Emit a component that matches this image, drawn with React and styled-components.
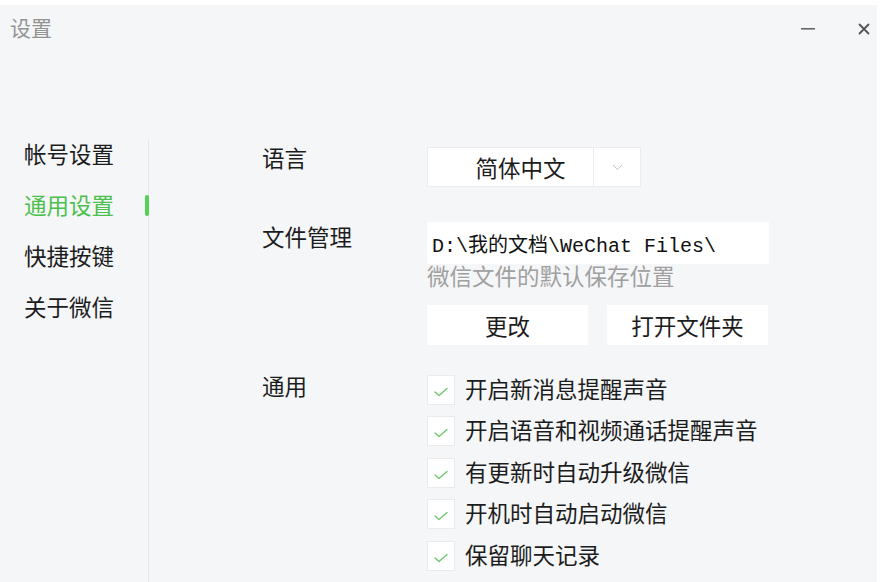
import React from "react";
import styled, { createGlobalStyle } from "styled-components";

const Global = createGlobalStyle`
  html, body { margin: 0; padding: 0; background: #ffffff; overflow: hidden; }
  body { font-family: "Noto Sans CJK SC", "Noto Sans", sans-serif; color: #1c1c1c; }
  * { box-sizing: border-box; }
`;

const Window = styled.div`
  margin-top: 5px;
  width: 877px;
  height: 577px;
  background: #f5f6f8;
  display: flex;
  flex-direction: column;
  overflow: hidden;
`;

const TitleBar = styled.div`
  height: 123px;
  flex-shrink: 0;
  display: flex;
  align-items: flex-start;
  justify-content: space-between;
  padding: 8px 0 0 10px;
`;

const Title = styled.div`
  font-size: 21px;
  line-height: 28px;
  color: #939393;
`;

const Controls = styled.div`
  display: flex;
  align-items: center;
  gap: 36px;
  padding: 6px 3px 0 0;
`;

const CtrlBtn = styled.div`
  width: 20px;
  height: 20px;
  display: flex;
  align-items: center;
  justify-content: center;
`;

const Body = styled.div`
  flex: 1;
  display: flex;
`;

const Sidebar = styled.nav`
  position: relative;
  width: 149px;
  flex-shrink: 0;
  padding-left: 24px;
  &::after {
    content: "";
    position: absolute;
    right: 0;
    top: 12px;
    bottom: 0;
    width: 1px;
    background: #e4e5e8;
  }
`;

const NavItem = styled.div`
  position: relative;
  height: 51px;
  line-height: 51px;
  font-size: 22.5px;
  color: ${(p) => (p.$active ? "#4cc04c" : "#1c1c1c")};
`;

const Indicator = styled.span`
  position: absolute;
  right: 0;
  top: 16px;
  width: 4px;
  height: 21px;
  border-radius: 2px;
  background: #56d056;
  z-index: 1;
`;

const Content = styled.div`
  flex: 1;
  padding: 19px 0 0 113px;
  display: flex;
  flex-direction: column;
`;

const Row = styled.div`
  display: flex;
  align-items: flex-start;
  margin-bottom: ${(p) => p.$mb || 0}px;
`;

const Label = styled.div`
  width: 165px;
  flex-shrink: 0;
  font-size: 22.5px;
  line-height: 30px;
  margin-top: ${(p) => p.$mt || 0}px;
`;

const Field = styled.div`
  display: flex;
  flex-direction: column;
`;

const Select = styled.div`
  width: 214px;
  height: 40px;
  background: #fff;
  border: 1px solid #ececee;
  display: flex;
  align-items: stretch;
`;

const SelectValue = styled.div`
  width: 166px;
  border-right: 1px solid #ececee;
  display: flex;
  align-items: center;
  justify-content: center;
  padding-left: 20px;
  font-size: 22.5px;
`;

const SelectArrow = styled.div`
  flex: 1;
  display: flex;
  align-items: center;
  justify-content: center;
`;

const PathBox = styled.div`
  width: 342px;
  height: 42px;
  background: #fff;
  display: flex;
  align-items: center;
  padding-left: 5px;
  font-family: "Liberation Mono", "Noto Sans CJK SC", monospace;
  font-size: 20px;
  color: #111;
  white-space: nowrap;
`;

const Hint = styled.div`
  font-size: 22.5px;
  line-height: 22px;
  color: #a0a0a0;
`;

const ButtonRow = styled.div`
  display: flex;
  gap: 19px;
  margin-top: 19px;
`;

const Button = styled.div`
  width: 161px;
  height: 40px;
  background: #fff;
  display: flex;
  align-items: center;
  justify-content: center;
  font-size: 22.5px;
`;

const CheckList = styled.div`
  display: flex;
  flex-direction: column;
`;

const CheckRow = styled.div`
  height: 41.5px;
  display: flex;
  align-items: center;
  gap: 10px;
  font-size: 22.5px;
`;

const Box = styled.div`
  width: 28px;
  height: 30px;
  margin-top: 4px;
  background: #fff;
  border: 1px solid #e9eaec;
  display: flex;
  align-items: center;
  justify-content: center;
  padding-top: 4px;
`;

const Check = () => (
  <svg width="14" height="10" viewBox="0 0 14 10">
    <path d="M1 5 L5 8.5 L13 1.5" fill="none" stroke="#6ac66a" strokeWidth="1.3" strokeLinecap="round" strokeLinejoin="round" />
  </svg>
);

const options = [
  "开启新消息提醒声音",
  "开启语音和视频通话提醒声音",
  "有更新时自动升级微信",
  "开机时自动启动微信",
  "保留聊天记录",
];

export default function App() {
  return (
    <>
      <Global />
      <Window>
        <TitleBar>
          <Title>设置</Title>
          <Controls>
            <CtrlBtn>
              <svg width="14" height="4" viewBox="0 0 14 4">
                <rect x="0" y="1" width="14" height="1.6" fill="#666" />
              </svg>
            </CtrlBtn>
            <CtrlBtn>
              <svg width="12" height="12" viewBox="0 0 12 12">
                <path d="M1.5 1.5 L10.5 10.5 M10.5 1.5 L1.5 10.5" stroke="#555" strokeWidth="1.8" strokeLinecap="round" />
              </svg>
            </CtrlBtn>
          </Controls>
        </TitleBar>
        <Body>
          <Sidebar>
            <NavItem>帐号设置</NavItem>
            <NavItem $active>
              通用设置
              <Indicator />
            </NavItem>
            <NavItem>快捷按键</NavItem>
            <NavItem>关于微信</NavItem>
          </Sidebar>
          <Content>
            <Row $mb={35}>
              <Label $mt={-5}>语言</Label>
              <Select>
                <SelectValue>简体中文</SelectValue>
                <SelectArrow>
                  <svg width="11" height="7" viewBox="0 0 11 7">
                    <path d="M1 1 L5.5 5.5 L10 1" fill="none" stroke="#c4c4c4" strokeWidth="1" />
                  </svg>
                </SelectArrow>
              </Select>
            </Row>
            <Row $mb={22}>
              <Label $mt={-1}>文件管理</Label>
              <Field>
                <PathBox>D:\我的文档\WeChat Files\</PathBox>
                <Hint>微信文件的默认保存位置</Hint>
                <ButtonRow>
                  <Button>更改</Button>
                  <Button>打开文件夹</Button>
                </ButtonRow>
              </Field>
            </Row>
            <Row>
              <Label $mt={3}>通用</Label>
              <CheckList>
                {options.map((o) => (
                  <CheckRow key={o}>
                    <Box>
                      <Check />
                    </Box>
                    {o}
                  </CheckRow>
                ))}
              </CheckList>
            </Row>
          </Content>
        </Body>
      </Window>
    </>
  );
}
